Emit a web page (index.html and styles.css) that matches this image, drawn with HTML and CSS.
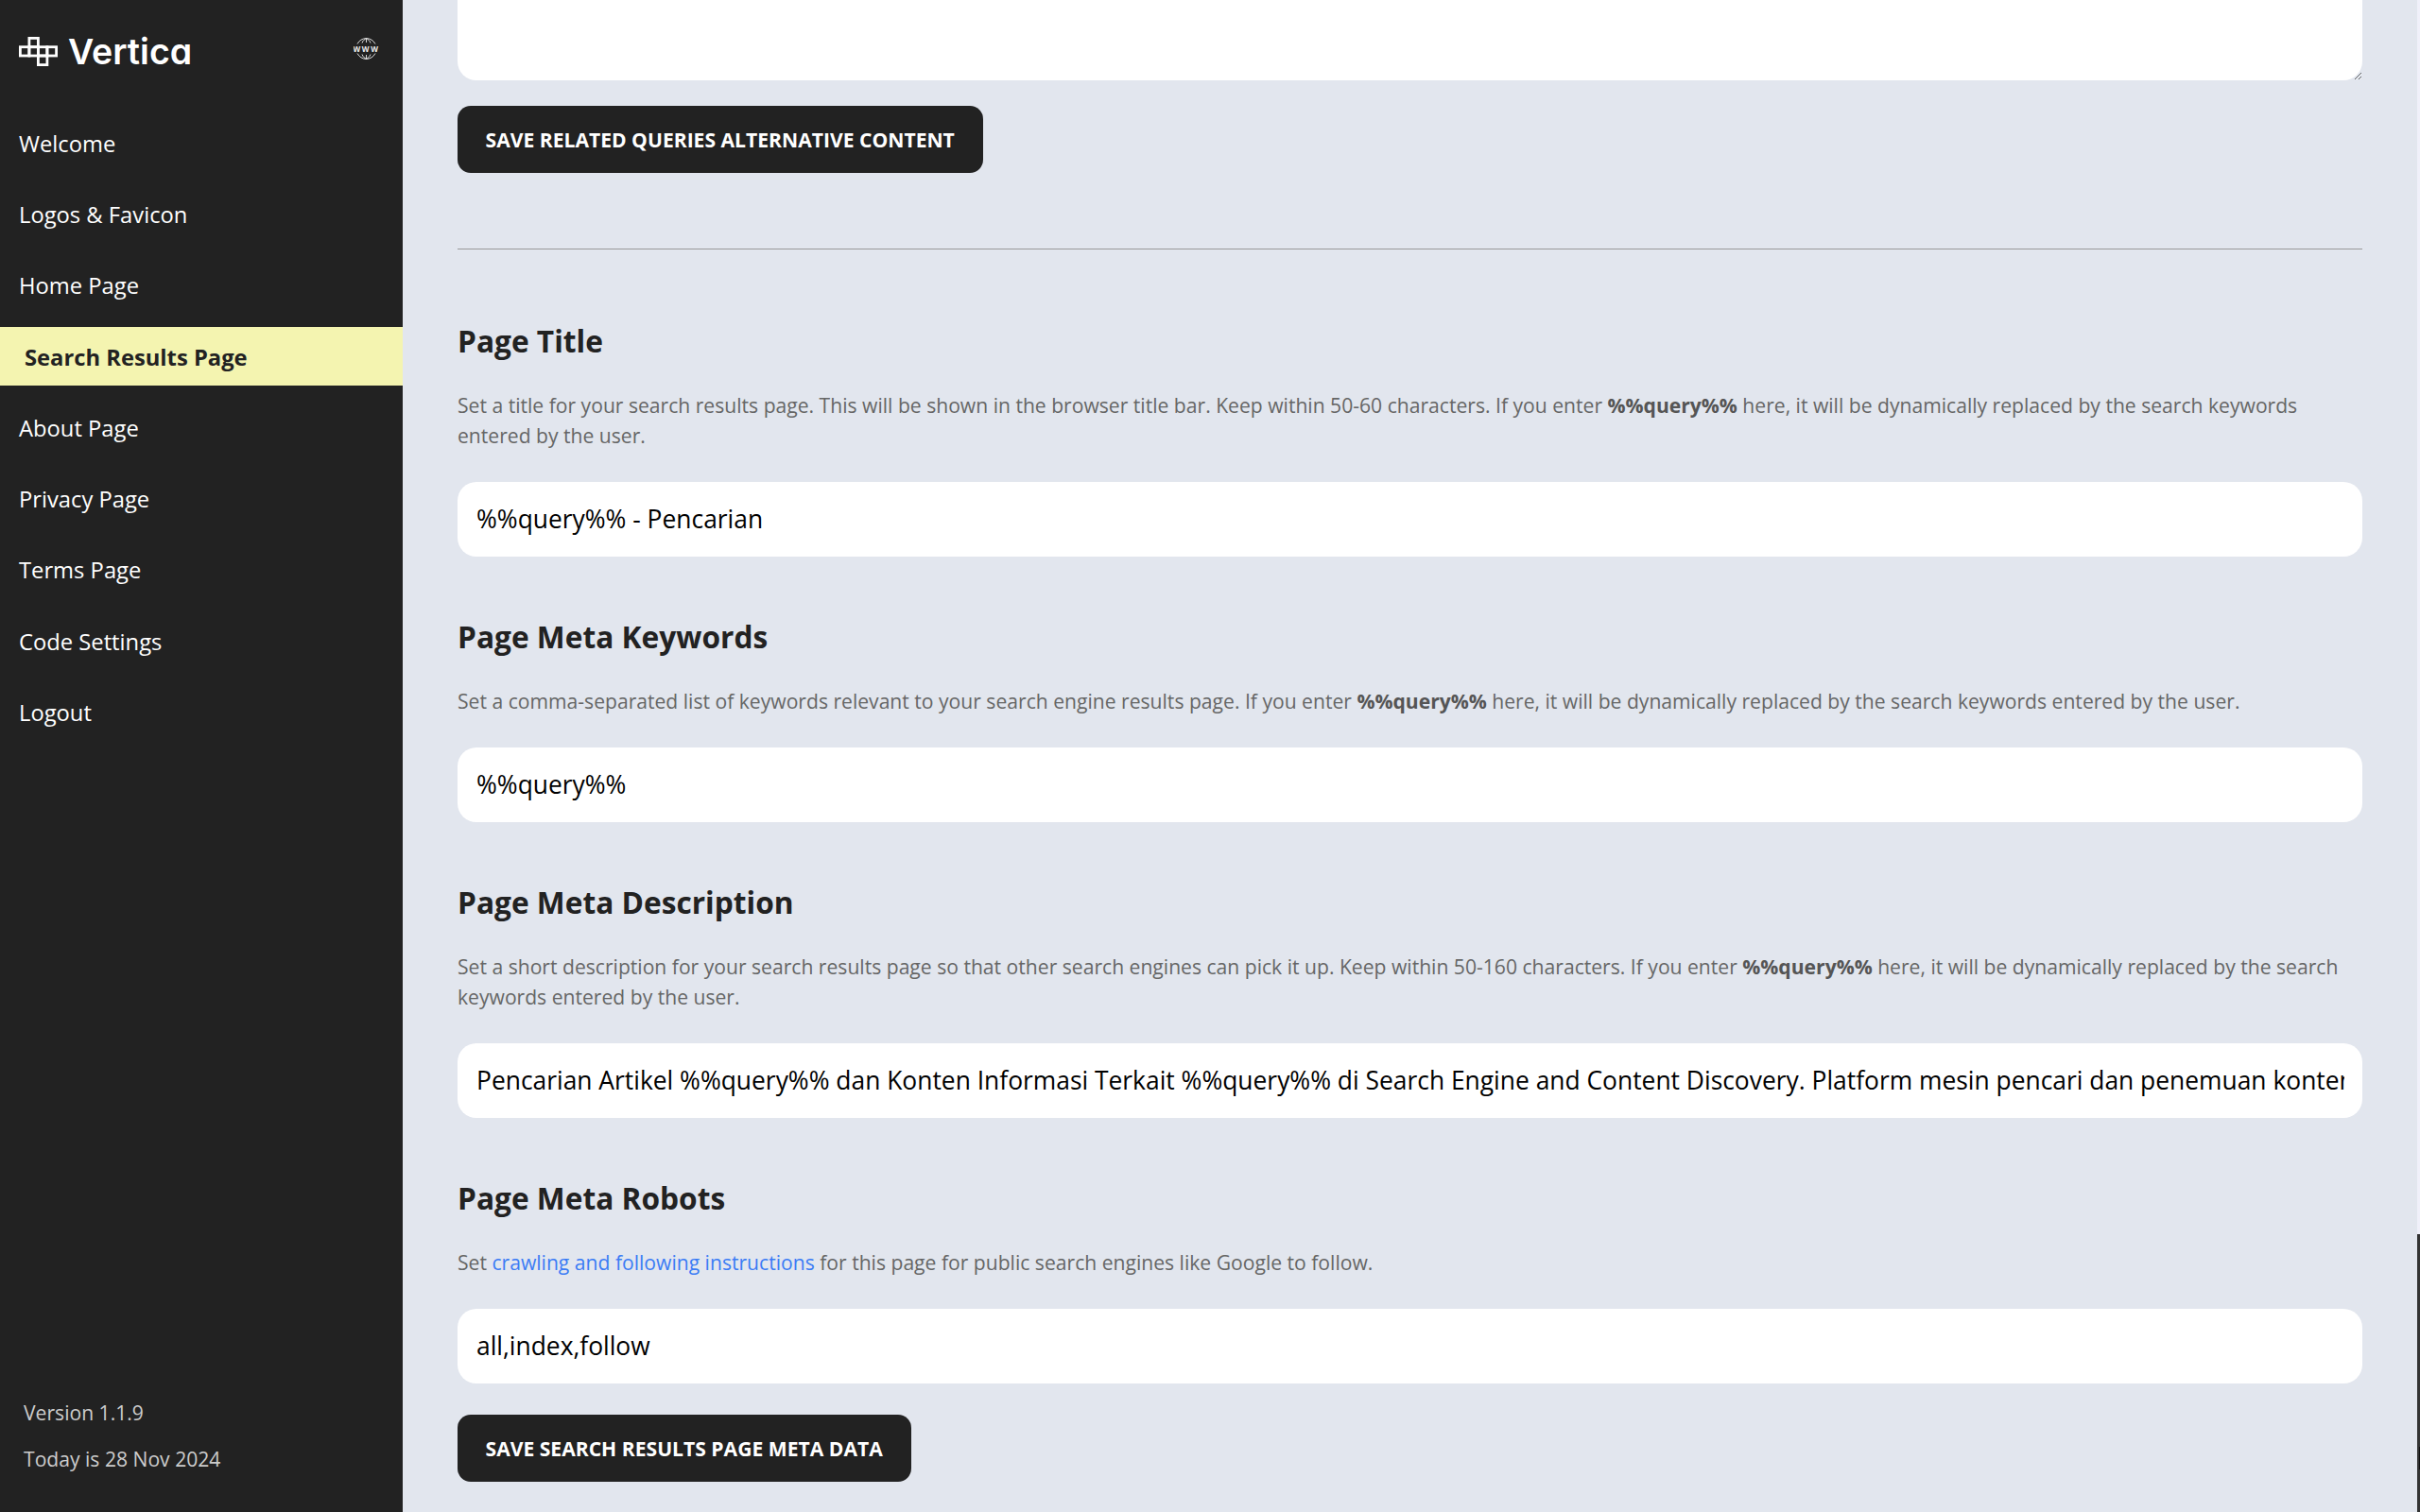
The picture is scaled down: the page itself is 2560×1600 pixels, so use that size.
FILE: index.html
```html
<!DOCTYPE html>
<html>
<head>
    <meta charset="UTF-8">
    <meta name="viewport" content="width=device-width, initial-scale=1.0">
    <title>Search Results Page</title>
    <link rel="stylesheet" href="styles.css">
</head>
<body>
    <aside class="sidebar">
        <div class="brand">
            <div class="logo">
                <svg class="logo-mark" viewBox="0 0 41 31" width="41" height="31">
                    <g fill="none" stroke="#fff" stroke-width="2.800">
                        <rect x="10.900" y="1.400" width="9.500" height="9.300"/>
                        <rect x="1.400" y="10.700" width="9.500" height="9.300"/>
                        <rect x="10.900" y="10.700" width="9.500" height="9.300"/>
                        <rect x="20.400" y="10.700" width="9.500" height="9.300"/>
                        <rect x="29.900" y="10.700" width="9.700" height="9.300"/>
                        <rect x="20.400" y="20" width="9.500" height="9.600"/>
                    </g>
                </svg>
                <span class="logo-text">Vertica</span>
            </div>
            <svg class="www-icon" viewBox="0 0 27 23" width="27" height="23">
                <g fill="none" stroke="#eee" stroke-width=".9">
                    <path d="M4 6.500C6 2.800 9.300 .6 13.500 .6S21 2.800 23 6.500"/>
                    <path d="M9 5.500C10 3 11.700 1.200 13.500 .6c1.800 .6 3.500 2.400 4.500 4.900"/>
                    <path d="M13.500 .6V5"/>
                    <path d="M4 16.500C6 20.200 9.300 22.400 13.500 22.400S21 20.200 23 16.500"/>
                    <path d="M9 17.500c1 2.500 2.700 4.300 4.500 4.900 1.800-.6 3.500-2.400 4.500-4.900"/>
                    <path d="M13.500 18v4.400"/>
                </g>
                <text x="13.500" y="14.500" class="www-text">WWW</text>
            </svg>
        </div>

        <nav class="menu">
            <a class="menu-item">Welcome</a>
            <a class="menu-item">Logos &amp; Favicon</a>
            <a class="menu-item">Home Page</a>
            <a class="menu-item active">Search Results Page</a>
            <a class="menu-item">About Page</a>
            <a class="menu-item">Privacy Page</a>
            <a class="menu-item">Terms Page</a>
            <a class="menu-item">Code Settings</a>
            <a class="menu-item">Logout</a>
        </nav>

        <div class="sidebar-footer">
            <p>Version 1.1.9</p>
            <p>Today is 28 Nov 2024</p>
        </div>
    </aside>

    <main class="main">
        <textarea class="field-area"></textarea>
        <button class="save-btn">Save Related Queries Alternative Content</button>

        <hr class="divider">

        <section class="setting first">
            <h2>Page Title</h2>
            <p>Set a title for your search results page. This will be shown in the browser title bar. Keep within 50-60 characters. If you enter <strong>%%query%%</strong> here, it will be dynamically replaced by the search keywords entered by the user.</p>
            <input class="field" type="text" value="%%query%% - Pencarian">
        </section>

        <section class="setting">
            <h2>Page Meta Keywords</h2>
            <p>Set a comma-separated list of keywords relevant to your search engine results page. If you enter <strong>%%query%%</strong> here, it will be dynamically replaced by the search keywords entered by the user.</p>
            <input class="field" type="text" value="%%query%%">
        </section>

        <section class="setting">
            <h2>Page Meta Description</h2>
            <p>Set a short description for your search results page so that other search engines can pick it up. Keep within 50-160 characters. If you enter <strong>%%query%%</strong> here, it will be dynamically replaced by the search keywords entered by the user.</p>
            <input class="field" type="text" value="Pencarian Artikel %%query%% dan Konten Informasi Terkait %%query%% di Search Engine and Content Discovery. Platform mesin pencari dan penemuan konten terbaik">
        </section>

        <section class="setting">
            <h2>Page Meta Robots</h2>
            <p>Set <a href="#">crawling and following instructions</a> for this page for public search engines like Google to follow.</p>
            <input class="field" type="text" value="all,index,follow">
        </section>

        <button class="save-btn last">Save Search Results Page Meta Data</button>
    </main>

    <div class="scrollbar">
        <div class="scrollbar-thumb">
            <span class="scrollbar-mark"></span>
        </div>
    </div>
</body>
</html>
```

FILE: styles.css
```css
* {
    box-sizing: border-box;
}

body {
    margin: 0;
    height: 100vh;
    overflow: hidden;
    display: flex;
    background-color: #e2e6ee;
    font-family: "Open Sans", Arial, sans-serif;
    color: #222;
}

/* sidebar */
.sidebar {
    width: 426px;
    flex-shrink: 0;
    background-color: #222;
    display: flex;
    flex-direction: column;
}

.brand {
    height: 120.600px;
    padding: 39px 25px 0 20px;
    display: flex;
    justify-content: space-between;
    align-items: flex-start;
}

.logo {
    display: flex;
    align-items: center;
    gap: 11px;
}

.logo-mark,
.www-icon {
    display: block;
}

.www-icon {
    margin-top: 1px;
}

.logo-text {
    font-family: Inter, sans-serif;
    font-feature-settings: "cv11";
    font-size: 37.500px;
    line-height: 30px;
    font-weight: 600;
    color: #fff;
}

.www-text {
    font-family: "Open Sans", sans-serif;
    font-size: 8px;
    font-weight: 700;
    letter-spacing: 1.600px;
    text-anchor: middle;
    fill: #eee;
}

.menu {
    display: flex;
    flex-direction: column;
    gap: 13.300px;
}

.menu-item {
    height: 62px;
    padding-left: 20px;
    display: flex;
    align-items: center;
    font-size: 23.760px;
    color: #fff;
}

.menu-item.active {
    padding-left: 26px;
    padding-top: 1px;
    background-color: #f4f4b0;
    color: #222;
    font-weight: 700;
}

.sidebar-footer {
    margin-top: auto;
    padding: 0 0 32px 25px;
    font-size: 21.120px;
    color: #ccc;
}

.sidebar-footer p {
    margin: 0;
    line-height: 49px;
}

/* main */
.main {
    flex: 1;
    min-width: 0;
    padding: 0 58px;
}

.field-area {
    display: block;
    width: 100%;
    height: 125px;
    margin-top: -40px;
    border: none;
    border-radius: 20px;
    background-color: #fff;
    outline: none;
}

.save-btn {
    display: block;
    height: 71px;
    margin-top: 27px;
    padding: 0 30.500px 0 29.500px;
    border: none;
    border-radius: 14px;
    background-color: #222;
    font-family: "Open Sans", Arial, sans-serif;
    font-size: 21.120px;
    font-weight: 700;
    text-transform: uppercase;
    color: #fff;
}

.save-btn.last {
    margin-top: 33px;
}

.divider {
    height: 1px;
    margin: 80px 0 0;
    border: none;
    background-color: #999;
}

.setting {
    margin-top: 63px;
}

.setting.first {
    margin-top: 75px;
}

.setting h2 {
    margin: 0;
    font-size: 31.680px;
    line-height: 44px;
    font-weight: 700;
}

.setting p {
    margin: 30px 0 33px;
    font-size: 21.120px;
    line-height: 32px;
    color: #666;
}

.setting p strong {
    color: #555;
}

.setting p a {
    color: #3b7cf5;
    text-decoration: none;
}

.field {
    display: block;
    width: 100%;
    height: 79px;
    padding: 0 19px 1px 20px;
    border: none;
    border-radius: 20px;
    background-color: #fff;
    font-family: "Open Sans", Arial, sans-serif;
    font-size: 26.400px;
    color: #000;
    outline: none;
}

/* right edge scrollbar */
.scrollbar {
    width: 3px;
    flex-shrink: 0;
    display: flex;
    flex-direction: column;
    justify-content: flex-end;
    background-color: #f0f0fa;
}

.scrollbar-thumb {
    height: 294px;
    background-color: #333;
    position: relative;
}

.scrollbar-mark {
    position: absolute;
    top: 225px;
    right: 0;
    width: 1px;
    height: 24px;
    background-color: #111;
}
```
